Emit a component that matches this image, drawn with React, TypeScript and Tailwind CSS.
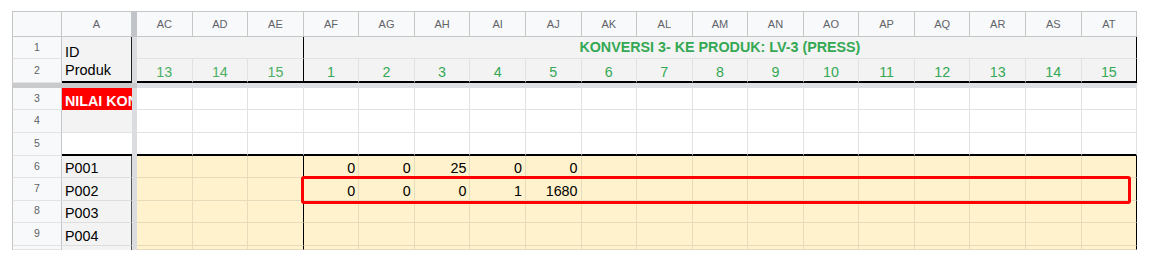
import React from 'react';

const COLS = ['AC','AD','AE','AF','AG','AH','AI','AJ','AK','AL','AM','AN','AO','AP','AQ','AR','AS','AT'];
const NUMS = [13,14,15,1,2,3,4,5,6,7,8,9,10,11,12,13,14,15];

const HDR = 'bg-[#f8f9fa] border-[#c4c7c5] text-[#5f6368] text-[11px] flex items-center justify-center';
const ROWNUM = 'bg-[#f8f9fa] border-l border-r border-b border-l-[#c4c7c5] border-r-[#c4c7c5] border-b-[#e3e3e3] text-[#5f6368] text-[10.5px] flex items-center justify-center';

type RowKind = 'white' | 'beige';

function DataRow({ n, kind, colA, colAClass, last5 }: { n: number; kind: RowKind; colA?: React.ReactNode; colAClass: string; last5?: boolean }) {
  const vals: Record<number, (number | null)[]> = {
    6: [null, null, null, 0, 0, 25, 0, 0],
    7: [null, null, null, 0, 0, 0, 1, 1680],
  };
  const v = vals[n] || [];
  return (
    <>
      <div className={ROWNUM}>{n <= 9 ? n : ''}</div>
      <div className={colAClass}>{colA}</div>
      <div className="bg-[#dadce0]" />
      {COLS.map((c, i) => {
        const edge = i === 2 || i === 17;
        let cls: string;
        if (kind === 'white') {
          cls = last5
            ? 'bg-white border-r border-r-[#e2e2e2] border-b-2 border-b-black'
            : 'bg-white border-r border-b border-[#e2e2e2]';
        } else {
          cls = edge
            ? 'bg-[#fff2cc] border-r border-b border-r-black border-b-[#e6dbbb] flex items-end justify-end pr-[3px] pb-[1px]'
            : 'bg-[#fff2cc] border-r border-b border-[#e6dbbb] flex items-end justify-end pr-[3px] pb-[1px]';
        }
        const val = v[i];
        return (
          <div key={c} className={cls}>
            {val !== undefined && val !== null ? <span className="leading-[16px] text-[#000]">{val}</span> : null}
          </div>
        );
      })}
    </>
  );
}

export default function App() {
  return (
    <div className="relative w-[1152px] h-[261px] bg-white pl-[12px] pt-[11px] overflow-hidden font-['Liberation_Sans',Arial,sans-serif] text-[14.3px] text-black">
      <div className="grid grid-cols-[50px_70px_5px_repeat(18,55.57px)] grid-rows-[25.7px_22.6px_24px_5px_22.2px_22.8px_22.4px_22.6px_22.4px_22.3px_22.7px_4.3px]">
        {/* header row */}
        <div className="bg-[#f8f9fa] border border-[#c4c7c5]" />
        <div className={HDR + ' border-t border-r border-b'}>A</div>
        <div className="bg-[#c0c3c7]" />
        {COLS.map((c) => (
          <div key={c} className={HDR + ' border-t border-r border-b'}>{c}</div>
        ))}

        {/* row 1 */}
        <div className={ROWNUM}>1</div>
        <div className="row-span-2 bg-[#f3f3f3] border-r border-r-[#222] border-b-2 border-b-black pl-[3px] pb-[2px] flex flex-col justify-end leading-[17.5px] text-[14.5px]">
          <span>ID</span>
          <span>Produk</span>
        </div>
        <div className="bg-[#dadce0]" />
        <div className="col-span-3 bg-[#f3f3f3] border-r border-b border-r-black border-b-[#e2e2e2]" />
        <div className="col-span-15 bg-[#f3f3f3] border-r border-b border-r-black border-b-[#e2e2e2] flex items-center justify-center">
          <span className="font-bold text-[#34a853] leading-[16px]">KONVERSI 3- KE PRODUK: LV-3 (PRESS)</span>
        </div>

        {/* row 2 */}
        <div className={ROWNUM}>2</div>
        <div className="bg-[#dadce0]" />
        {NUMS.map((num, i) => {
          const edge = i === 2 || i === 17;
          const cls = edge
            ? 'bg-[#f3f3f3] border-r border-r-black border-b-2 border-b-black flex items-end justify-center pb-[1.5px]'
            : 'bg-[#f3f3f3] border-r border-r-[#e2e2e2] border-b-2 border-b-black flex items-end justify-center pb-[1.5px]';
          return (
            <div key={i} className={cls}>
              <span className={i < 3 ? 'leading-[16px] text-[#4caf63]' : 'leading-[16px] text-[#34a853]'}>{num}</span>
            </div>
          );
        })}

        {/* freeze row */}
        <div className="col-span-3 bg-[#c9cacc]" />
        <div className="col-span-18 bg-[#dde0e4]" />

        {/* row 3 */}
        <DataRow
          n={3}
          kind="white"
          colAClass="bg-[#ff0000] overflow-hidden whitespace-nowrap pl-[3px] flex items-end pb-[1px]"
          colA={<span className="font-bold text-white leading-[16px]">NILAI KONVERSI</span>}
        />
        <DataRow n={4} kind="white" colAClass="bg-[#f3f3f3] border-b border-[#e2e2e2]" />
        <DataRow n={5} kind="white" last5 colAClass="bg-white border-b-2 border-b-black" />
        {['P001', 'P002', 'P003', 'P004'].map((p, idx) => (
          <DataRow
            key={p}
            n={6 + idx}
            kind="beige"
            colAClass="bg-[#f3f3f3] border-r border-b border-r-[#555] border-b-[#dedede] pl-[3px] flex items-end pb-[1px]"
            colA={<span className="leading-[16px]">{p}</span>}
          />
        ))}
        <DataRow n={10} kind="beige" colAClass="bg-[#f3f3f3] border-r border-r-[#555]" />
      </div>

      {/* highlight box */}
      <div className="absolute left-[301px] top-[176px] w-[830px] h-[28px] border-[3px] border-[#ff0000] rounded-[3px]" />
    </div>
  );
}
